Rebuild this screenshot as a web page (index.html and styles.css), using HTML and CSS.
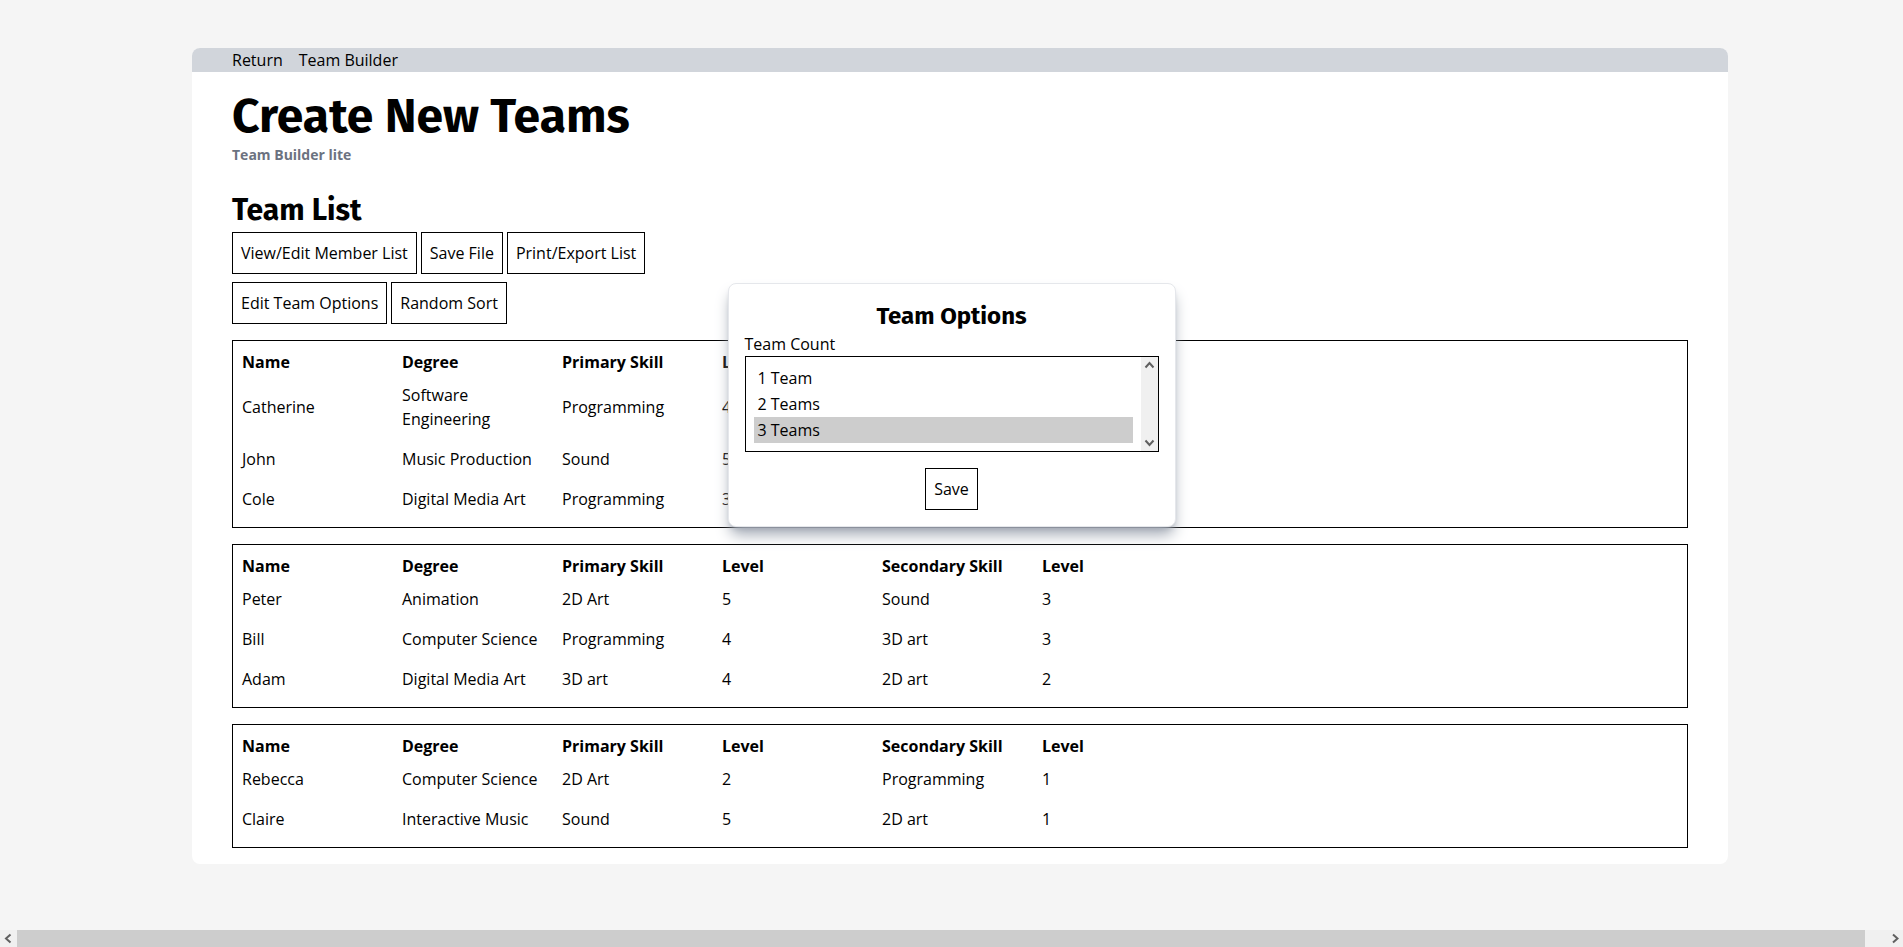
FILE: index.html
```
<!DOCTYPE html>
<html lang="en">
<head>
<meta charset="utf-8">
<meta name="viewport" content="width=device-width, initial-scale=1">
<title>Team Builder</title>
<link rel="stylesheet" href="styles.css">
</head>
<body>
<div class="page">
  <div class="stage">
    <div class="card">
      <nav class="navbar">
        <a href="#return">Return</a>
        <a href="#builder">Team Builder</a>
      </nav>
      <main class="content">
        <h1 class="title">Create New Teams</h1>
        <p class="subtitle">Team Builder lite</p>
        <h2 class="section-title">Team List</h2>
        <div class="toolbar">
          <button class="btn" type="button">View/Edit Member List</button>
          <button class="btn" type="button">Save File</button>
          <button class="btn" type="button">Print/Export List</button>
        </div>
        <div class="toolbar">
          <button class="btn" type="button">Edit Team Options</button>
          <button class="btn" type="button">Random Sort</button>
        </div>
        <div class="teams">
          <section class="team">
            <table class="members">
              <thead><tr><th>Name</th><th>Degree</th><th>Primary Skill</th><th>Level</th><th>Secondary Skill</th><th>Level</th></tr></thead>
              <tbody>
                <tr><td>Catherine</td><td>Software Engineering</td><td>Programming</td><td>4</td><td></td><td></td></tr>
                <tr><td>John</td><td>Music Production</td><td>Sound</td><td>5</td><td></td><td></td></tr>
                <tr><td>Cole</td><td>Digital Media Art</td><td>Programming</td><td>3</td><td></td><td></td></tr>
              </tbody>
            </table>
          </section>
          <section class="team">
            <table class="members">
              <thead><tr><th>Name</th><th>Degree</th><th>Primary Skill</th><th>Level</th><th>Secondary Skill</th><th>Level</th></tr></thead>
              <tbody>
                <tr><td>Peter</td><td>Animation</td><td>2D Art</td><td>5</td><td>Sound</td><td>3</td></tr>
                <tr><td>Bill</td><td>Computer Science</td><td>Programming</td><td>4</td><td>3D art</td><td>3</td></tr>
                <tr><td>Adam</td><td>Digital Media Art</td><td>3D art</td><td>4</td><td>2D art</td><td>2</td></tr>
              </tbody>
            </table>
          </section>
          <section class="team">
            <table class="members">
              <thead><tr><th>Name</th><th>Degree</th><th>Primary Skill</th><th>Level</th><th>Secondary Skill</th><th>Level</th></tr></thead>
              <tbody>
                <tr><td>Rebecca</td><td>Computer Science</td><td>2D Art</td><td>2</td><td>Programming</td><td>1</td></tr>
                <tr><td>Claire</td><td>Interactive Music</td><td>Sound</td><td>5</td><td>2D art</td><td>1</td></tr>
              </tbody>
            </table>
          </section>
        </div>
      </main>
    </div>
  </div>
  <div class="hscroll" aria-hidden="true">
    <svg class="arrow" viewBox="0 0 17 17"><path d="M10.500 4.500 6 8.500l4.500 4"/></svg>
    <div class="hscroll-track"><div class="hscroll-thumb"></div></div>
    <svg class="arrow" viewBox="0 0 17 17"><path d="M7 4.500 11.500 8.500l-4.500 4"/></svg>
  </div>
</div>

<form class="modal" role="dialog" aria-labelledby="options-title">
  <h3 class="modal-title" id="options-title">Team Options</h3>
  <label for="team-count">Team Count</label>
  <div class="listbox">
    <select class="listbox-select" id="team-count" size="3">
      <option>1 Team</option>
      <option>2 Teams</option>
      <option selected>3 Teams</option>
    </select>
    <div class="vscroll" aria-hidden="true">
      <svg class="arrow" viewBox="0 0 17 17"><path d="M4.500 10.500 8.500 6l4 4.500"/></svg>
      <svg class="arrow" viewBox="0 0 17 17"><path d="M4.500 6.500 8.500 11l4-4.500"/></svg>
    </div>
  </div>
  <button class="btn modal-save" type="button">Save</button>
</form>
</body>
</html>
```
FILE: styles.css
```
*,
*::before,
*::after {
  box-sizing: border-box;
}

body {
  margin: 0;
  background: #f5f5f5;
  color: #000;
  font-family: "Open Sans", "Noto Sans", sans-serif;
  font-size: 16px;
  line-height: 24px;
}

h1, h2, h3, p {
  margin: 0;
}

button, select {
  font: inherit;
  color: inherit;
}

.page {
  display: flex;
  flex-direction: column;
  min-height: 100vh;
}

.stage {
  flex: 1;
  padding: 48px 175px 48px 192px;
}

.card {
  background: #fff;
  border-radius: 8px;
  overflow: hidden;
}

.navbar {
  display: flex;
  gap: 16px;
  padding: 0 40px;
  background: #d1d5db;
}

.navbar a {
  color: inherit;
  text-decoration: none;
}

.content {
  padding: 20px 40px 16px;
}

.title,
.section-title,
.modal-title {
  font-family: "Fira Sans", "Open Sans", sans-serif;
  font-weight: 700;
}

.title {
  font-size: 48px;
  line-height: 48px;
}

.subtitle {
  margin-top: 5px;
  color: #6b7280;
  font-size: 14px;
  line-height: 20px;
  font-weight: 700;
}

.section-title {
  margin-top: 27px;
  margin-bottom: 4px;
  font-size: 30px;
  line-height: 36px;
}

.toolbar {
  display: flex;
  gap: 4px;
  margin-bottom: 8px;
}

.btn {
  padding: 8px;
  background: #fff;
  border: 1px solid #000;
  border-radius: 0;
  line-height: 24px;
}

.teams {
  display: grid;
  gap: 16px;
  margin-top: 16px;
}

.team {
  padding: 8px;
  border: 1px solid #000;
}

.members {
  border-collapse: collapse;
  table-layout: fixed;
  width: 960px;
}

.members th,
.members td {
  padding: 8px 16px 8px 1px;
  text-align: left;
  vertical-align: middle;
}

.members th {
  padding: 1px;
}

.modal {
  position: absolute;
  top: 283px;
  left: 0;
  right: 0;
  display: flex;
  flex-direction: column;
  width: 448px;
  margin: 0 auto;
  padding: 16px;
  background: #fff;
  border: 1px solid #e5e7eb;
  border-radius: 8px;
  box-shadow: 0 10px 15px -3px #9ca3af, 0 4px 6px -4px #9ca3af;
}

.modal-title {
  font-size: 24px;
  line-height: 32px;
  text-align: center;
}

.listbox {
  display: flex;
  margin-bottom: 16px;
  border: 1px solid #000;
}

.listbox-select {
  flex: 1;
  padding: 8px;
  background: #fff;
  border: 0;
  border-radius: 0;
  outline: 0;
  overflow: hidden;
}

.listbox-select option {
  min-height: 26px;
  padding: 2px 4px 0;
  line-height: 24px;
}

.listbox-select option:checked {
  background: #cdcdcd;
  color: #000;
}

.vscroll {
  display: flex;
  flex-direction: column;
  justify-content: space-between;
  background: #f0f0f0;
}

.arrow {
  display: block;
  flex: none;
  width: 17px;
  height: 17px;
  fill: none;
  stroke: #606060;
  stroke-width: 2;
}

.modal-save {
  align-self: center;
}

.hscroll {
  display: flex;
  background: #f0f0f0;
}

.hscroll-track {
  flex: 1;
}

.hscroll-thumb {
  width: 98.9%;
  height: 17px;
  background: #cdcdcd;
}
```
